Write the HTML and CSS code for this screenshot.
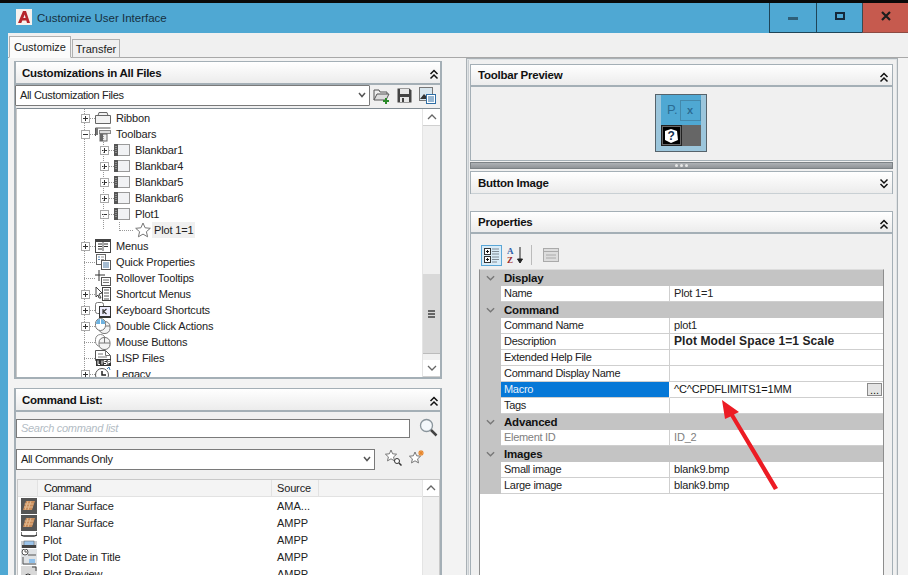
FILE: index.html
```html
<!DOCTYPE html>
<html lang="en">
<head>
<meta charset="utf-8">
<title>Customize User Interface</title>
<link rel="stylesheet" href="styles.css">
</head>
<body>
<svg class="defs" width="0" height="0" aria-hidden="true">
  <symbol id="chev-up" viewBox="0 0 12 12"><path d="M2.500 6l3.500-3.500L9.500 6M2.500 10.500L6 7l3.500 3.500" fill="none" stroke="#111" stroke-width="1.500"/></symbol>
  <symbol id="chev-down" viewBox="0 0 12 12"><path d="M2.500 1.500L6 5l3.500-3.500M2.500 6L6 9.500 9.500 6" fill="none" stroke="#111" stroke-width="1.500"/></symbol>
  <symbol id="bar" viewBox="0 0 16 16"><rect x=".5" y="2.500" width="15" height="11" fill="#f1f2f4" stroke="#9a9a9a"/><rect x="0" y="2" width="4" height="12" fill="#555"/><path d="M2 4v8" stroke="#ccc" stroke-dasharray="1 1"/></symbol>
  <symbol id="folder" viewBox="0 0 16 16"><path d="M.5 5.500h15v8H.5zM3 5.500l1-3h8l1 3" fill="#f2f2f2" stroke="#666"/></symbol>
  <symbol id="toolbars" viewBox="0 0 16 16"><path d="M.5 2h15M.5 2v8" stroke="#555" fill="none"/><rect x="4.500" y="4.500" width="11" height="3" fill="#ddd" stroke="#888"/><rect x="5" y="8" width="7" height="7" fill="#eee" stroke="#666"/><rect x="5" y="8" width="3" height="7" fill="#666"/><rect x="1" y="2" width="2" height="7" fill="#777"/></symbol>
  <symbol id="menus" viewBox="0 0 16 16"><rect x=".5" y="1.500" width="15" height="13" fill="#fff" stroke="#444"/><path d="M.5 3h15" stroke="#444" stroke-width="2"/><path d="M3 6h4M3 8.500h4M3 11h4M9 6h4M9 8.500h4" stroke="#333"/><path d="M8 4v9" stroke="#555"/></symbol>
  <symbol id="quick" viewBox="0 0 16 16"><rect x="1.500" y=".5" width="9" height="10" fill="#fff" stroke="#666"/><path d="M3 3h2M3 5.500h2" stroke="#5a86b0"/><path d="M6 3h3M6 5.500h3" stroke="#999"/><rect x="6.500" y="6.500" width="9" height="9" fill="#fff" stroke="#555"/><path d="M8 9h6M8 11h6M8 13h6" stroke="#4c7aa5"/></symbol>
  <symbol id="rollover" viewBox="0 0 16 16"><path d="M4 0v11M-1 5h11" stroke="#333"/><rect x="6.500" y="7.500" width="9" height="8" fill="#fff" stroke="#555"/><path d="M8 10h6M8 12.500h6" stroke="#777"/></symbol>
  <symbol id="shortcut" viewBox="0 0 16 16"><path d="M1 1l6 6-3 1 2 4-2 0-1-3-2 2z" fill="#fff" stroke="#444"/><rect x="7.500" y="1.500" width="8" height="13" fill="#fff" stroke="#444"/><path d="M9 4h5M9 7h5M9 10h5M9 13h5" stroke="#555"/></symbol>
  <symbol id="dbl" viewBox="0 0 16 16"><rect x="4" y="3.500" width="11" height="12" rx="5" fill="#f3f3f3" stroke="#777"/><path d="M4 8h11M9.500 4v4" stroke="#777"/><rect x=".5" y=".5" width="10" height="12" rx="5" fill="#fff" stroke="#777"/><path d="M1 6h9V4Q8 .5 5.500 1 1 1 1 6z" fill="#6db2e0"/><path d="M5.500 1v5" stroke="#fff"/></symbol>
  <symbol id="mouse" viewBox="0 0 16 16"><rect x=".5" y=".5" width="10" height="12" rx="5" fill="#fff" stroke="#888"/><rect x="4" y="3.500" width="11" height="12" rx="5" fill="#f3f3f3" stroke="#777"/><path d="M4 9h11M9.500 4v5" stroke="#777"/></symbol>
  <symbol id="legacy" viewBox="0 0 16 16"><circle cx="7" cy="9" r="6.500" fill="#fff" stroke="#555"/><path d="M7 5v4h4" fill="none" stroke="#222" stroke-width="1.500"/><path d="M12 3l2-2M14 1l1 3" stroke="#3b7fb5" fill="none"/></symbol>
  <symbol id="star" viewBox="0 0 16 16"><path d="M8 1l2.100 4.800 5.200.5-3.900 3.400 1.200 5.100L8 12.100 3.400 14.800l1.200-5.100L.7 6.300l5.200-.5z" fill="#fff" stroke="#777"/></symbol>
  <symbol id="surface" viewBox="0 0 16 16"><rect width="16" height="16" fill="#555"/><path d="M5 3h9l-3 9H2z" fill="#c98c5a"/><path d="M7 3L4 12M10 3L7 12M3.500 6h9M3 9h9" stroke="#e9c9a5" stroke-width=".7"/></symbol>
  <symbol id="plot" viewBox="0 0 16 16"><path d="M0 0v3l3 1h10l3-1V0" fill="none" stroke="#333" stroke-width="1.300"/><rect x="0" y="9" width="16" height="7" fill="#c8ccd0"/><rect x="3" y="9" width="10" height="5" fill="#9cc4ea" stroke="#555" stroke-width=".5"/><path d="M1 16v-3h14v3" fill="#444"/></symbol>
  <symbol id="plotdate" viewBox="0 0 16 16"><rect width="16" height="16" fill="#dfe2e5"/><circle cx="4" cy="3" r="3" fill="#fff" stroke="#555"/><path d="M4 1v2h2M7 6h8M2 8v7h13" stroke="#555" fill="none"/><rect x="8" y="10" width="6" height="4" fill="#8fc0ea"/></symbol>
  <symbol id="plotprev" viewBox="0 0 16 16"><rect width="16" height="16" fill="#d8d8d8"/><path d="M11 1h4v4" fill="none" stroke="#444"/><circle cx="7" cy="11" r="3" fill="#fff" stroke="#333"/></symbol>
</svg>

<div class="window">
  <header class="titlebar">
    <div class="app-logo"><svg viewBox="0 0 16 16" width="16" height="16"><path d="M2 14L7 2h3l4 12h-3l-.7-2.500H6.300L5.300 14zM7.300 9h2.300L8.700 5.500z" fill="#b5252b"/></svg></div>
    <div class="app-title">Customize User Interface</div>
    <div class="win-buttons">
      <button class="win-btn"><span class="ico-min"></span></button>
      <button class="win-btn"><span class="ico-max"></span></button>
      <button class="win-btn win-close"><svg viewBox="0 0 10 10" width="10" height="10"><path d="M1 1l8 8M9 1l-8 8" stroke="#1d1d1d" stroke-width="2.200"/></svg></button>
    </div>
  </header>

  <div class="client">
    <div class="tabs">
      <div class="tab tab-active">Customize</div>
      <div class="tab">Transfer</div>
    </div>

    <div class="page">
      <section class="left">
        <div class="panel panel-files">
          <div class="panel-head"><span>Customizations in All Files</span><svg class="chev"><use href="#chev-up"/></svg></div>
          <div class="files-bar">
            <div class="combo combo-files"><span>All Customization Files</span><svg class="combo-arrow" viewBox="0 0 8 6"><path d="M1 1l3 3.500L7 1" fill="none" stroke="#555" stroke-width="1.500"/></svg></div>
            <div class="file-tools">
              <svg viewBox="0 0 17 17" width="17" height="17"><path d="M1 13V3h5l1 2h7v3" fill="#eee" stroke="#555"/><path d="M1 13l3-6h12l-3 6z" fill="#ddd" stroke="#555"/><path d="M10 14h6M13 11v6" stroke="#2a8a2a" stroke-width="2"/></svg>
              <svg viewBox="0 0 15 15" width="15" height="15"><path d="M.5.500h12l2 2v12H.500z" fill="#444"/><rect x="3" y="1" width="9" height="5" fill="#e8e8e8"/><rect x="3" y="9" width="9" height="5" fill="#e8e8e8"/><rect x="5" y="10" width="2" height="4" fill="#444"/></svg>
              <svg viewBox="0 0 17 17" width="17" height="17"><rect x=".5" y=".5" width="13" height="13" fill="#d8e6ee" stroke="#777"/><path d="M1 12l4-5 3 3 2-2 3 4H1z" fill="#333"/><rect x="7.500" y="7.500" width="9" height="9" fill="#fff" stroke="#2f6ea5"/><path d="M9 10h6M9 12h6M9 14h6" stroke="#2f6ea5"/></svg>
            </div>
          </div>
          <div class="tree-box">
            <div class="tree">
              <div class="tree-row l1"><span class="exp plus"></span><svg class="ti"><use href="#folder"/></svg><span class="tt">Ribbon</span></div>
              <div class="tree-row l1"><span class="exp minus"></span><svg class="ti"><use href="#toolbars"/></svg><span class="tt">Toolbars</span></div>
              <div class="tree-row l2"><span class="exp plus"></span><svg class="ti"><use href="#bar"/></svg><span class="tt">Blankbar1</span></div>
              <div class="tree-row l2"><span class="exp plus"></span><svg class="ti"><use href="#bar"/></svg><span class="tt">Blankbar4</span></div>
              <div class="tree-row l2"><span class="exp plus"></span><svg class="ti"><use href="#bar"/></svg><span class="tt">Blankbar5</span></div>
              <div class="tree-row l2"><span class="exp plus"></span><svg class="ti"><use href="#bar"/></svg><span class="tt">Blankbar6</span></div>
              <div class="tree-row l2"><span class="exp minus"></span><svg class="ti"><use href="#bar"/></svg><span class="tt">Plot1</span></div>
              <div class="tree-row l3"><span class="elbow"></span><svg class="ti"><use href="#star"/></svg><span class="tt tt-sel">Plot 1=1</span></div>
              <div class="tree-row l1"><span class="exp plus"></span><svg class="ti"><use href="#menus"/></svg><span class="tt">Menus</span></div>
              <div class="tree-row l1"><span class="exp none"></span><svg class="ti"><use href="#quick"/></svg><span class="tt">Quick Properties</span></div>
              <div class="tree-row l1"><span class="exp none"></span><svg class="ti"><use href="#rollover"/></svg><span class="tt">Rollover Tooltips</span></div>
              <div class="tree-row l1"><span class="exp plus"></span><svg class="ti"><use href="#shortcut"/></svg><span class="tt">Shortcut Menus</span></div>
              <div class="tree-row l1"><span class="exp plus"></span><svg class="ti" viewBox="0 0 16 16"><rect x=".5" y=".5" width="8" height="11" rx="2" fill="#fff" stroke="#777"/><rect x="4.500" y="4.500" width="11" height="10" fill="#eef" stroke="#333"/><rect x="4" y="14" width="12" height="2" fill="#333"/><path d="M8 7v5M11.500 7L8.500 9.500l3 2.500" fill="none" stroke="#333" stroke-width="1.200"/></svg><span class="tt">Keyboard Shortcuts</span></div>
              <div class="tree-row l1"><span class="exp plus"></span><svg class="ti"><use href="#dbl"/></svg><span class="tt">Double Click Actions</span></div>
              <div class="tree-row l1"><span class="exp none"></span><svg class="ti"><use href="#mouse"/></svg><span class="tt">Mouse Buttons</span></div>
              <div class="tree-row l1"><span class="exp none"></span><svg class="ti" viewBox="0 0 16 16"><path d="M.5.500h10l5 5v5H.5z" fill="#fff" stroke="#555"/><path d="M10.500.500v5h5M3 4h5M3 7h9" fill="none" stroke="#777"/><rect x="1" y="9" width="15" height="7" fill="#333"/><path d="M3 10.500v4h2M7 10.500v4M9 14.500h2.500v-2H9v-2h2.500M13 14.500v-4h2v2h-2" fill="none" stroke="#fff"/></svg><span class="tt">LISP Files</span></div>
              <div class="tree-row l1"><span class="exp plus"></span><svg class="ti"><use href="#legacy"/></svg><span class="tt">Legacy</span></div>
            </div>
            <div class="scrollbar">
              <div class="sb-btn"><svg viewBox="0 0 10 6" width="10" height="6"><path d="M1 5l4-4 4 4" fill="none" stroke="#666" stroke-width="1.300"/></svg></div>
              <div class="sb-track"></div>
              <div class="sb-thumb"><span class="grip"></span></div>
              <div class="sb-btn"><svg viewBox="0 0 10 6" width="10" height="6"><path d="M1 1l4 4 4-4" fill="none" stroke="#666" stroke-width="1.300"/></svg></div>
            </div>
          </div>
        </div>

        <div class="panel panel-cmds">
          <div class="panel-head"><span>Command List:</span><svg class="chev"><use href="#chev-up"/></svg></div>
          <div class="search-row">
            <div class="search-input">Search command list</div>
            <svg viewBox="0 0 19 19" width="19" height="19"><circle cx="7.500" cy="7.500" r="6" fill="#f4f8fb" stroke="#8a959c" stroke-width="1.300"/><path d="M12 12l5.500 5.500" stroke="#444" stroke-width="2.500"/></svg>
          </div>
          <div class="filter-row">
            <div class="combo combo-cmds"><span>All Commands Only</span><svg class="combo-arrow" viewBox="0 0 8 6"><path d="M1 1l3 3.500L7 1" fill="none" stroke="#555" stroke-width="1.500"/></svg></div>
            <svg class="star-tool" viewBox="0 0 17 17" width="17" height="17"><path d="M6 1l1.600 3.800 4 .4-3 2.700.9 4L6 9.800 2.500 11.900l.9-4-3-2.700 4-.4z" fill="#fff" stroke="#777"/><circle cx="12" cy="12" r="2.500" fill="#fff" stroke="#333"/><path d="M14 14l2.500 2.500" stroke="#333" stroke-width="1.500"/></svg>
            <svg class="star-tool" viewBox="0 0 17 17" width="17" height="17"><path d="M7 3l1.600 3.800 4 .4-3 2.700.9 4L7 11.800 3.500 13.900l.9-4-3-2.700 4-.4z" fill="#fff" stroke="#777"/><path d="M13 1v6M10 4h6M11 2l4 4M15 2l-4 4" stroke="#e8862a" stroke-width="1.100"/></svg>
          </div>
          <div class="cmd-box">
            <div class="cmd-table">
              <div class="cmd-head"><span class="c-ico"></span><span class="c-name">Command</span><span class="c-src">Source</span></div>
              <div class="cmd-row"><svg class="c-svg"><use href="#surface"/></svg><span class="c-name">Planar Surface</span><span class="c-src">AMA...</span></div>
              <div class="cmd-row"><svg class="c-svg"><use href="#surface"/></svg><span class="c-name">Planar Surface</span><span class="c-src">AMPP</span></div>
              <div class="cmd-row"><svg class="c-svg"><use href="#plot"/></svg><span class="c-name">Plot</span><span class="c-src">AMPP</span></div>
              <div class="cmd-row"><svg class="c-svg"><use href="#plotdate"/></svg><span class="c-name">Plot Date in Title</span><span class="c-src">AMPP</span></div>
              <div class="cmd-row"><svg class="c-svg"><use href="#plotprev"/></svg><span class="c-name">Plot Preview</span><span class="c-src">AMPP</span></div>
            </div>
            <div class="scrollbar scrollbar-cmds">
              <div class="sb-btn"><svg viewBox="0 0 10 6" width="10" height="6"><path d="M1 5l4-4 4 4" fill="none" stroke="#666" stroke-width="1.300"/></svg></div>
            </div>
          </div>
        </div>
      </section>

      <section class="right">
        <div class="panel-r">
          <div class="panel-head"><span>Toolbar Preview</span><svg class="chev"><use href="#chev-up"/></svg></div>
          <div class="preview">
            <div class="tb-preview">
              <div class="tb-top"><span class="tb-p">P.</span><span class="tb-x">x</span></div>
              <div class="tb-bottom">
                <div class="tb-q"><svg viewBox="0 0 18 18" width="18" height="18"><path d="M3 4l6-2 6 2 1 9-7 3-6-3z" fill="#fff"/><text x="5.500" y="13" font-size="12" font-weight="700" font-family="Liberation Sans" fill="#14304f">?</text></svg></div>
                <div class="tb-gray"></div>
              </div>
            </div>
          </div>
        </div>
        <div class="splitter"><i></i><i></i><i></i></div>
        <div class="panel-r panel-collapsed">
          <div class="panel-head"><span>Button Image</span><svg class="chev"><use href="#chev-down"/></svg></div>
        </div>
        <div class="panel-r panel-props">
          <div class="panel-head"><span>Properties</span><svg class="chev"><use href="#chev-up"/></svg></div>
          <div class="props-tools">
            <span class="pt pt-on"><svg viewBox="0 0 18 18" width="18" height="18"><rect x="1.500" y="2.500" width="6" height="6" fill="#fff" stroke="#333"/><rect x="1.500" y="10.500" width="6" height="6" fill="#fff" stroke="#333"/><path d="M3 5.500h3M4.500 4v3M3 13.500h3M4.500 12v3" stroke="#111"/><path d="M9 3h7M9 5.500h7M9 8h7M9 11h7M9 13.500h7M9 16h5" stroke="#7f8a94"/></svg></span>
            <span class="pt"><svg viewBox="0 0 18 18" width="18" height="18"><text x="0" y="8" font-size="9" font-weight="700" font-family="Liberation Serif" fill="#2b5ea8">A</text><text x="0" y="17" font-size="9" font-weight="700" font-family="Liberation Serif" fill="#9c2b2b">Z</text><path d="M13 1v14M10.500 13l2.500 4 2.500-4z" stroke="#222" fill="#222"/></svg></span>
            <span class="pt-sep"></span>
            <span class="pt"><svg viewBox="0 0 18 18" width="18" height="18"><rect x="1.500" y="2.500" width="15" height="13" fill="#ddd" stroke="#aaa"/><path d="M1.500 5.500h15M4 9h10M4 12h10" stroke="#aaa"/></svg></span>
          </div>
          <div class="grid">
            <div class="g-cat"><svg class="g-tog" viewBox="0 0 10 6"><path d="M1 1l4 4 4-4" fill="none" stroke="#777" stroke-width="1.500"/></svg><span>Display</span></div>
            <div class="g-row"><span class="g-k">Name</span><span class="g-v">Plot 1=1</span></div>
            <div class="g-cat"><svg class="g-tog" viewBox="0 0 10 6"><path d="M1 1l4 4 4-4" fill="none" stroke="#777" stroke-width="1.500"/></svg><span>Command</span></div>
            <div class="g-row"><span class="g-k">Command Name</span><span class="g-v">plot1</span></div>
            <div class="g-row"><span class="g-k">Description</span><span class="g-v g-bold">Plot Model Space 1=1 Scale</span></div>
            <div class="g-row"><span class="g-k">Extended Help File</span><span class="g-v"></span></div>
            <div class="g-row"><span class="g-k">Command Display Name</span><span class="g-v"></span></div>
            <div class="g-row g-sel"><span class="g-k">Macro</span><span class="g-v">^C^CPDFLIMITS1=1MM<button class="g-more">...</button></span></div>
            <div class="g-row"><span class="g-k">Tags</span><span class="g-v"></span></div>
            <div class="g-cat"><svg class="g-tog" viewBox="0 0 10 6"><path d="M1 1l4 4 4-4" fill="none" stroke="#777" stroke-width="1.500"/></svg><span>Advanced</span></div>
            <div class="g-row g-dis"><span class="g-k">Element ID</span><span class="g-v">ID_2</span></div>
            <div class="g-cat"><svg class="g-tog" viewBox="0 0 10 6"><path d="M1 1l4 4 4-4" fill="none" stroke="#777" stroke-width="1.500"/></svg><span>Images</span></div>
            <div class="g-row"><span class="g-k">Small image</span><span class="g-v">blank9.bmp</span></div>
            <div class="g-row"><span class="g-k">Large image</span><span class="g-v">blank9.bmp</span></div>
          </div>
        </div>
      </section>
    </div>
  </div>

  <svg class="callout" viewBox="0 0 70 100" width="70" height="100" aria-hidden="true">
    <path d="M5 1L22 13 17 15.500 61 89 57 91 13.500 17.500 8 20z" fill="#ec1c24"/>
  </svg>
</div>
</body>
</html>
```

FILE: styles.css
```css
* { box-sizing: border-box; }
html, body { margin: 0; padding: 0; height: 100%; overflow: hidden; }
body { background: #000; font-family: "Liberation Sans", Arial, sans-serif; font-size: 11px; color: #111; }
.defs { position: absolute; }

.window { position: relative; width: 908px; height: 575px; overflow: hidden; padding-top: 3px; background: linear-gradient(#0a0a0a 3px, #4fa8d3 3px); display: flex; flex-direction: column; }

.titlebar { height: 30px; flex: none; display: flex; align-items: center; padding-left: 16px; background: #4fa8d3; }
.app-logo { width: 16px; height: 16px; background: #f6f2ee; margin-right: 5px; margin-top: -2px; }
.app-logo svg { display: block; }
.app-title { font-size: 11.5px; color: #16303f; margin-top: -1px; flex: 1; }
.win-buttons { display: flex; height: 30px; align-self: flex-start; }
.win-btn { width: 47px; height: 30px; padding: 0 0 3px; background: #4fa8d3; border: 0; border-left: 1px solid #1f4558; border-bottom: 1px solid #1f4558; display: flex; align-items: center; justify-content: center; }
.win-btn:nth-child(2) { width: 46px; }
.win-close { width: 46px; background: #c65a4e; border-left-color: #3a4a50; border-bottom-color: #8d4a42; }
.ico-min { width: 10px; height: 3px; margin-top: 4px; background: #2f5f78; }
.ico-max { width: 10px; height: 8px; border: 2px solid #14283a; }

.client { margin-left: 8px; flex: 1; min-height: 0; background: #f0f0f0; display: flex; flex-direction: column; }

.tabs { height: 25px; flex: none; display: flex; align-items: flex-end; padding-left: 1px; gap: 1px; border-bottom: 1px solid #a8a8a8; }
.tab { height: 19px; width: 48px; margin-bottom: -1px; border: 1px solid #b0b0b0; background: #f0f0f0; color: #222; text-align: center; line-height: 18px; font-size: 11px; }
.tab-active { height: 22px; width: 62px; background: #fbfbfb; border-bottom-color: #fbfbfb; line-height: 20px; position: relative; z-index: 1; margin-bottom: -1px; }

.page { flex: 1; min-height: 0; display: flex; align-items: flex-start; background: #f3f3f3; }
.left { width: 428px; margin-left: 6px; padding-top: 3px; display: flex; flex-direction: column; gap: 9px; flex: none; }
.right { width: 432px; margin-left: 24px; height: 520px; border: 1px solid #a9b0b5; border-bottom: 0; box-shadow: inset 0 0 0 1px #dfe3e5, inset 2px 0 0 #c9ced2; padding: 5px 3px 0; background: #f0f0f0; flex: none; }

.panel { border: 2px solid #a4afb6; border-top-width: 1px; background: #f0f0f0; }
.panel-files { height: 318px; }
.panel-cmds { height: 190px; }

.panel-head { height: 23px; display: flex; align-items: center; justify-content: space-between; padding: 0 0 0 6px; background: linear-gradient(#fff, #ececec); border-bottom: 2px solid #a4afb6; font-weight: 700; font-size: 11.500px; letter-spacing: -.24px; color: #111; }
.chev { width: 12px; height: 12px; margin-top: 3px; flex: none; }

.files-bar { height: 23px; display: flex; align-items: flex-start; background: #f0f0f0; }
.combo { height: 21px; background: #fff; border: 1px solid #7a7a7a; display: flex; align-items: center; justify-content: space-between; padding: 0 3px 1px 4px; color: #222; letter-spacing: -.33px; }
.combo-arrow { width: 8px; height: 6px; }
.combo-files { width: 355px; margin-left: -1px; border-radius: 1px; }
.combo-cmds { width: 359px; flex: none; }
.file-tools { display: flex; align-items: center; gap: 7px; padding: 2px 0 0 3px; }

.tree-box { height: 269px; display: flex; background: #fff; border-top: 1px solid #7f8a92; border-left: 1px solid #c8c8c8; }
.tree { flex: 1; min-width: 0; height: 268px; overflow: hidden; padding-top: 1px; background-image: repeating-linear-gradient(#999 0 1px, transparent 1px 2px); background-size: 1px 100%; background-position: 67px 0; background-repeat: no-repeat; }
.tree-row { height: 16px; display: flex; align-items: center; color: #222; position: relative; }
.tree-row.l1 { padding-left: 64px; }
.tree-row.l2 { padding-left: 83px; }
.tree-row.l3 { padding-left: 102px; }
.tree-row.l2::before, .tree-row.l3::before { content: ""; position: absolute; left: 86px; top: -8px; height: 16px; width: 1px; background: repeating-linear-gradient(#999 0 1px, transparent 1px 2px); }
.exp { width: 14px; height: 9px; flex: none; position: relative; }
.exp::after { content: ""; position: absolute; left: 9px; top: 4px; width: 5px; height: 1px; background: repeating-linear-gradient(90deg, #999 0 1px, transparent 1px 2px); }
.plus, .minus { background-repeat: no-repeat; background-image: linear-gradient(#333, #333), linear-gradient(#333, #333), linear-gradient(#fff, #fff), linear-gradient(#aaa, #aaa); background-size: 5px 1px, 1px 5px, 7px 7px, 9px 9px; background-position: 2px 4px, 4px 2px, 1px 1px, 0 0; }
.minus { background-image: linear-gradient(#333, #333), linear-gradient(#fff, #fff), linear-gradient(#fff, #fff), linear-gradient(#aaa, #aaa); }
.none::after { left: 3px; width: 11px; }
.elbow { width: 14px; height: 9px; margin-right: 2px; margin-top: -8px; border-left: 1px dotted #999; border-bottom: 1px dotted #999; flex: none; }
.ti { width: 16px; height: 16px; flex: none; }
.tt { margin-left: 5px; line-height: 16px; white-space: nowrap; letter-spacing: -.15px; }
.tt-sel { margin-left: 1px; padding: 0 2px; background: #f0f0f0; }

.scrollbar { width: 18px; flex: none; display: flex; flex-direction: column; background: #f0f0f0; border-left: 1px solid #e4e4e4; }
.sb-btn { height: 17px; flex: none; background: #fff; display: flex; align-items: center; justify-content: center; border-bottom: 1px solid #d0d0d0; }
.sb-track { height: 148px; flex: none; background: #f0f0f0; }
.sb-thumb { flex: 1; background: #d9d9d9; display: flex; align-items: center; justify-content: center; border-bottom: 1px solid #bbb; margin-bottom: 6px; }
.grip { width: 7px; height: 8px; background: repeating-linear-gradient(#666 0 2px, transparent 2px 3px); }

.search-row { height: 31px; display: flex; align-items: center; gap: 9px; }
.search-input { width: 394px; height: 19px; background: #fff; border: 1px solid #7a7a7a; color: #b3bcc4; font-style: italic; padding-left: 4px; line-height: 17px; margin-top: 2px; letter-spacing: -.3px; flex: none; }
.filter-row { height: 36px; display: flex; align-items: flex-start; padding-top: 6px; }
.star-tool { margin-left: 10px; }
.star-tool + .star-tool { margin-left: 6px; }
.cmd-box { height: 99px; margin-left: 1px; display: flex; background: #fff; border: 1px solid #c9c9c9; overflow: hidden; }
.cmd-table { flex: 1; }
.cmd-head { height: 17px; display: flex; align-items: center; background: #f4f4f4; border-bottom: 1px solid #e2e2e2; }
.c-ico { width: 20px; height: 16px; flex: none; border-right: 1px solid #e2e2e2; background: #f0f0f0; }
.c-name { width: 234px; flex: none; padding-left: 6px; letter-spacing: -.15px; }
.cmd-head .c-name { height: 16px; line-height: 16px; border-right: 1px solid #e2e2e2; letter-spacing: -.5px; }
.cmd-head .c-src { width: 47px; height: 16px; padding-left: 5px; line-height: 16px; border-right: 1px solid #e2e2e2; letter-spacing: -.15px; }
.cmd-row { height: 17px; display: flex; align-items: center; color: #222; }
.cmd-row .c-name { margin-left: 1px; padding-left: 5px; }
.c-svg { width: 16px; height: 16px; margin-left: 3px; flex: none; }
.c-src { padding-left: 5px; color: #222; }
.scrollbar-cmds { width: 17px; }

.panel-r { border: 1px solid #a4afb6; width: 423px; }
.panel-r .panel-head { height: 22px; padding: 0 2px 0 7px; }
.preview { height: 73px; display: flex; justify-content: center; padding: 7px 2px 0 0; background: #f0f0f0; }
.tb-preview { width: 52px; height: 58px; border: 1px solid #56636b; background: #9cc6dc; padding: 0 5px 5px; }
.tb-top { height: 30px; background: #4fa8d3; display: flex; align-items: center; justify-content: flex-end; color: #2b6c93; }
.tb-p { margin-right: 2px; font-size: 13px; margin-top: -1px; }
.tb-x { width: 21px; height: 21px; border: 1px solid #4488ab; text-align: center; line-height: 19px; font-weight: 700; font-size: 11px; }
.tb-bottom { display: flex; height: 21px; }
.tb-q { width: 21px; height: 21px; background: #000; border: 1px solid #222; box-shadow: inset 0 0 0 1px #666; display: flex; align-items: center; justify-content: center; }
.tb-gray { width: 19px; background: #666; }
.splitter { height: 7px; width: 423px; margin: 1px 0 2px; background: linear-gradient(#aeb2b6, #8f9397); border: 1px solid #7c8286; display: flex; justify-content: center; align-items: center; gap: 2px; }
.splitter i { width: 3px; height: 3px; border-radius: 50%; background: #e6e6e6; }
.panel-collapsed .panel-head { border-bottom: 1px solid #c9d0d4; }
.panel-collapsed { border-bottom: 0; }
.panel-props { margin-top: 17px; height: 366px; border-bottom: 0; }

.props-tools { height: 35px; padding: 7px 0 0 10px; display: flex; align-items: center; gap: 3px; }
.pt { width: 21px; height: 21px; display: flex; align-items: center; justify-content: center; }
.pt-on { background: #d9ecf8; border: 1px solid #5aa6d6; }
.pt-sep { width: 1px; height: 20px; background: #bbb; margin: 0 5px 0 2px; }

.grid { margin-left: 8px; width: 405px; height: 310px; background: #fff; border-top: 1px solid #ddd; border-left: 1px solid #8d8d8d; border-right: 1px solid #8d8d8d; }
.g-cat { height: 16px; background: #c4c4c4; display: flex; align-items: center; font-weight: 700; font-size: 11.500px; color: #111; letter-spacing: -.2px; }
.g-tog { width: 9px; height: 6px; margin: 0 9px 0 6px; flex: none; }
.g-row { height: 16px; display: flex; background: #c4c4c4; padding-left: 21px; }
.g-k { width: 169px; flex: none; background: #fff; padding-left: 3px; line-height: 15px; color: #222; border-bottom: 1px solid #cfcfcf; border-right: 1px solid #cfcfcf; white-space: nowrap; letter-spacing: -.3px; }
.g-v { flex: 1; min-width: 0; background: #fff; padding-left: 4px; line-height: 15px; color: #222; border-bottom: 1px solid #cfcfcf; display: flex; align-items: center; justify-content: space-between; white-space: nowrap; letter-spacing: -.18px; }
.g-bold { font-weight: 700; font-size: 12px; letter-spacing: .1px; }
.g-sel .g-k { background: #0678d7; color: #e8f2fb; border-right-color: #fff; }
.g-sel .g-v { padding-right: 1px; color: #111; }
.g-more { width: 15px; height: 13px; padding: 0; background: #e4e4e4; border: 1px solid #8a8a8a; font-size: 11px; line-height: 10px; color: #111; font-family: inherit; }
.g-dis .g-k, .g-dis .g-v { color: #808080; }

.callout { position: absolute; left: 717px; top: 399px; }
```
